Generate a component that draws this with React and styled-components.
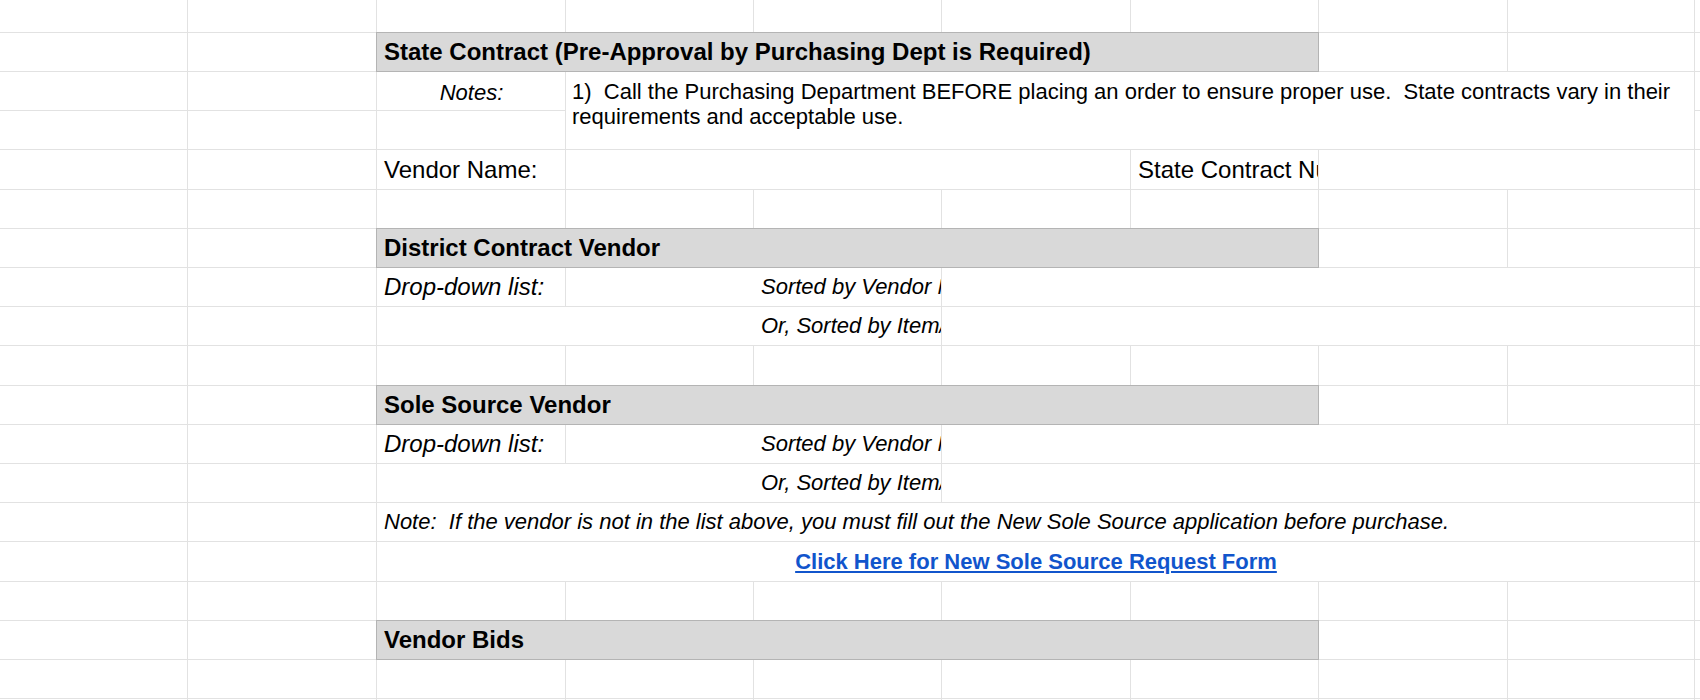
import React from "react";
import styled, { createGlobalStyle } from "styled-components";

const GlobalStyle = createGlobalStyle`
  html, body {
    margin: 0;
    padding: 0;
    background: #ffffff;
    overflow: hidden;
  }
  body {
    font-family: "Liberation Sans", Arial, sans-serif;
    color: #000;
  }
`;

// column widths / row heights of the visible part of the sheet
const COLS = [187, 188, 188, 187, 187, 188, 187, 188, 186, 188];
const ROWS = [32, 38, 38, 38, 39, 38, 38, 38, 38, 39, 38, 38, 38, 38, 39, 38, 38, 38, 38];

const Sheet = styled.div`
  display: grid;
  grid-template-columns: ${COLS.map((w) => w + "px").join(" ")};
  grid-template-rows: ${ROWS.map((h) => h + "px").join(" ")};
  gap: 1px;
  background: #e2e2e2;
  width: max-content;
  font-size: 24px;
`;

const Cell = styled.div`
  grid-column: ${(p) => p.$col + 1} / span ${(p) => p.$span || 1};
  grid-row: ${(p) => p.$row + 1} / span ${(p) => p.$rows || 1};
  background: #ffffff;
  display: flex;
  align-items: center;
  justify-content: ${(p) => (p.$center ? "center" : "flex-start")};
  padding: 0 6px 0 ${(p) => (p.$indent != null ? p.$indent : 7)}px;
  overflow: hidden;
  white-space: ${(p) => (p.$pre ? "pre" : "nowrap")};
  font-style: ${(p) => (p.$italic ? "italic" : "normal")};
  font-size: ${(p) => p.$size || 24}px;
  box-sizing: border-box;
  min-width: 0;
`;

const HeaderCell = styled(Cell)`
  background: #d9d9d9;
  font-weight: bold;
  outline: 1px solid #b4b4b4;
  position: relative;
  z-index: 1;
`;

const NotesCell = styled(Cell)`
  align-items: flex-start;
  padding-top: 7px;
  padding-left: 6px;
  line-height: 25px;
`;

const LabelCell = styled(Cell)`
  align-items: flex-start;
  padding-top: 8px;
`;

const Link = styled.a`
  color: #1155cc;
  font-weight: bold;
  text-decoration: underline;
  text-underline-offset: 2px;
`;

const special = [
  { r: 1, c: 2, span: 5, kind: "header", text: "State Contract (Pre-Approval by Purchasing Dept is Required)" },
  { r: 2, c: 2, kind: "label", size: 22, text: "Notes:" },
  {
    r: 2,
    c: 3,
    span: 6,
    rows: 2,
    kind: "notes",
    size: 22,
    text:
      "1)  Call the Purchasing Department BEFORE placing an order to ensure proper use.  State contracts vary in their\nrequirements and acceptable use.",
  },
  { r: 4, c: 2, text: "Vendor Name:" },
  { r: 4, c: 3, span: 3 },
  { r: 4, c: 6, text: "State Contract Number:" },
  { r: 4, c: 7, span: 2 },
  { r: 6, c: 2, span: 5, kind: "header", text: "District Contract Vendor" },
  { r: 7, c: 2, italic: true, text: "Drop-down list:" },
  { r: 7, c: 3, span: 2, italic: true, size: 22, indent: 195, text: "Sorted by Vendor Name" },
  { r: 7, c: 5, span: 4 },
  { r: 8, c: 2, span: 3, italic: true, size: 22, indent: 384, text: "Or, Sorted by Item/Commodity" },
  { r: 8, c: 5, span: 4 },
  { r: 10, c: 2, span: 5, kind: "header", text: "Sole Source Vendor" },
  { r: 11, c: 2, italic: true, text: "Drop-down list:" },
  { r: 11, c: 3, span: 2, italic: true, size: 22, indent: 195, text: "Sorted by Vendor Name" },
  { r: 11, c: 5, span: 4 },
  { r: 12, c: 2, span: 3, italic: true, size: 22, indent: 384, text: "Or, Sorted by Item/Commodity" },
  { r: 12, c: 5, span: 4 },
  {
    r: 13,
    c: 2,
    span: 7,
    italic: true,
    size: 22,
    pre: true,
    text: "Note:  If the vendor is not in the list above, you must fill out the New Sole Source application before purchase.",
  },
  { r: 14, c: 2, span: 7, kind: "link", size: 22, text: "Click Here for New Sole Source Request Form" },
  { r: 16, c: 2, span: 5, kind: "header", text: "Vendor Bids" },
];

function buildCells() {
  const taken = ROWS.map(() => COLS.map(() => false));
  special.forEach((s) => {
    for (let r = s.r; r < s.r + (s.rows || 1); r++)
      for (let c = s.c; c < s.c + (s.span || 1); c++) taken[r][c] = true;
  });
  const blanks = [];
  ROWS.forEach((_, r) =>
    COLS.forEach((__, c) => {
      if (!taken[r][c]) blanks.push({ r, c });
    })
  );
  return [...blanks, ...special];
}

function SheetCell({ cell }) {
  const common = {
    $row: cell.r,
    $col: cell.c,
    $span: cell.span,
    $rows: cell.rows,
    $italic: cell.italic,
    $indent: cell.indent,
    $size: cell.size,
    $pre: cell.pre,
  };
  if (cell.kind === "header") return <HeaderCell {...common}>{cell.text}</HeaderCell>;
  if (cell.kind === "notes")
    return (
      <NotesCell {...common} $pre>
        {cell.text}
      </NotesCell>
    );
  if (cell.kind === "label")
    return (
      <LabelCell {...common} $italic $center>
        {cell.text}
      </LabelCell>
    );
  if (cell.kind === "link")
    return (
      <Cell {...common} $center>
        <Link href="#">{cell.text}</Link>
      </Cell>
    );
  return <Cell {...common}>{cell.text}</Cell>;
}

export default function App() {
  const cells = buildCells();
  return (
    <>
      <GlobalStyle />
      <Sheet>
        {cells.map((cell) => (
          <SheetCell key={`${cell.r}-${cell.c}`} cell={cell} />
        ))}
      </Sheet>
    </>
  );
}
